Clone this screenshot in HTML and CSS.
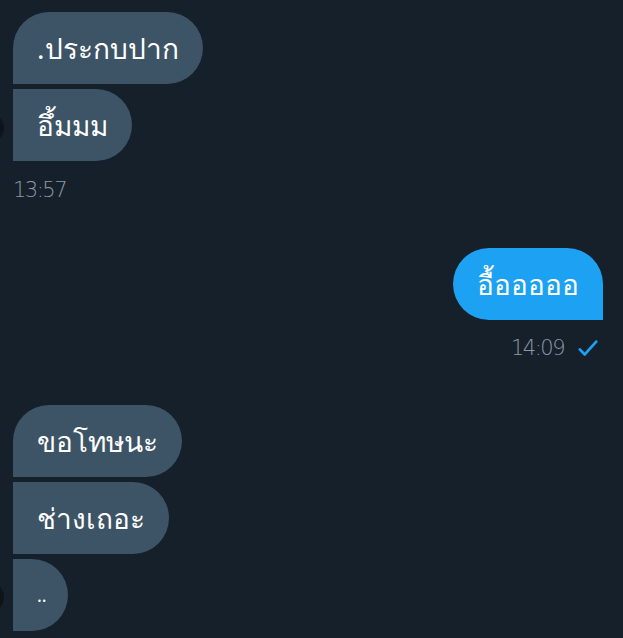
FILE: index.html
```html
<!DOCTYPE html>
<html lang="th">
<head>
    <meta charset="UTF-8">
    <meta name="viewport" content="width=device-width, initial-scale=1.0">
    <title>Messages</title>
    <link rel="stylesheet" href="styles.css">
</head>
<body>
    <div class="chat">
        <div class="group received">
            <div class="avatar avatar-top"></div>
            <div class="bubble first">.ประกบปาก</div>
            <div class="bubble">อึ้มมม</div>
            <div class="meta">13:57</div>
        </div>

        <div class="group sent">
            <div class="bubble">อื้อออออ</div>
            <div class="meta">14:09
                <svg class="check" viewBox="0 0 24 24" width="22" height="22">
                    <path d="M3 13.5l5.5 5.5L21 5" fill="none" stroke="#1da1f2" stroke-width="3" stroke-linecap="round" stroke-linejoin="round"/>
                </svg>
            </div>
        </div>

        <div class="group received">
            <div class="avatar avatar-bottom"></div>
            <div class="bubble first">ขอโทษนะ</div>
            <div class="bubble">ช่างเถอะ</div>
            <div class="bubble dots">..</div>
        </div>
    </div>
</body>
</html>
```

FILE: styles.css
```css
/* Reset */
* {
    margin: 0;
    padding: 0;
    box-sizing: border-box;
}

body {
    background: #16202b;
    font-family: 'Noto Sans', 'DejaVu Sans', sans-serif;
    color: #fff;
    overflow: hidden;
}

.chat {
    display: flex;
    flex-direction: column;
    padding: 12px 20px 0 13px;
}

.group {
    display: flex;
    flex-direction: column;
    gap: 5px;
    position: relative;
}

.received {
    align-items: flex-start;
}

.sent {
    align-items: flex-end;
    margin-top: 39px;
    margin-bottom: 38px;
}

.bubble {
    height: 72px;
    padding: 0 24px;
    display: flex;
    align-items: center;
    font-size: 28px;
    line-height: 36px;
    background: #3d5466;
    border-radius: 0 36px 36px 0;
    white-space: nowrap;
}

.received .bubble.first {
    border-top-left-radius: 36px;
}

.sent .bubble {
    background: #1da1f2;
    border-radius: 36px 36px 0 36px;
}

.dots {
    font-size: 18px;
    padding: 0 21px 0 24px;
}

.meta {
    display: flex;
    align-items: center;
    gap: 13px;
    height: 38px;
    margin-top: 5px;
    font-family: 'DejaVu Sans', sans-serif;
    font-weight: 200;
    font-size: 21px;
    color: #8b99a6;
    letter-spacing: -1.5px;
}

.sent .meta {
    margin-top: 4px;
    padding-right: 4px;
}

/* avatar is mostly off screen, only its edge shows */
.avatar {
    position: absolute;
    left: -39px;
    width: 30px;
    height: 30px;
    border-radius: 50%;
    background: #0e141a;
}

.avatar-top {
    bottom: 66px;
}

.avatar-bottom {
    bottom: 19px;
}
```
